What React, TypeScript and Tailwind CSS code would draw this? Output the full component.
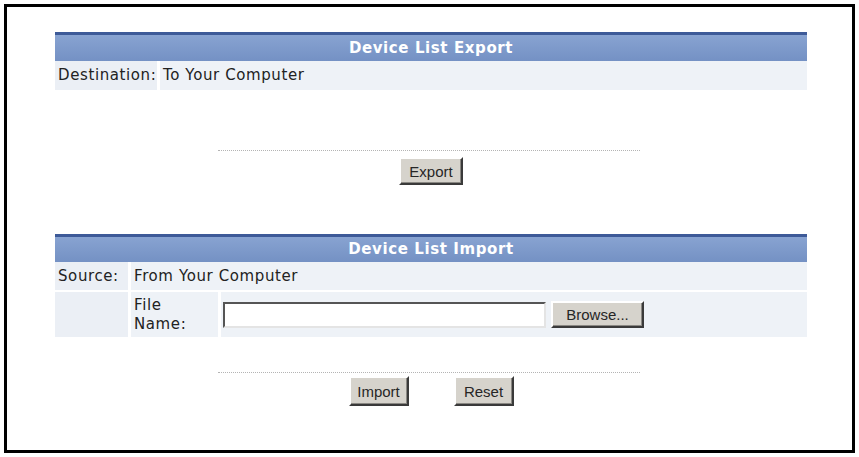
import type { ReactNode } from 'react'

const TEXT_FONT = "font-['DejaVu_Sans',Verdana,sans-serif]"
const BUTTON_FONT = "font-['Liberation_Sans',Arial,sans-serif]"

function SectionHeader({ title, height }: { title: string; height: string }) {
  return (
    <div
      className={`flex items-center justify-center border-t-[3px] border-[#3d5a98] bg-linear-to-b from-[#88a3d1] to-[#7491c4] text-[15px] font-bold tracking-[0.6px] text-white ${height} ${TEXT_FONT}`}
    >
      {title}
    </div>
  )
}

function ClassicButton({ children, size }: { children: ReactNode; size: string }) {
  return (
    <button
      className={`flex items-center justify-center border-2 border-t-white border-l-white border-r-[#3a3a3a] border-b-[#3a3a3a] bg-[#d6d3cc] text-[15px] leading-none tracking-normal text-[#262626] shadow-[inset_-1px_-1px_0_#8a8883] ${size} ${BUTTON_FONT}`}
      type="button"
    >
      {children}
    </button>
  )
}

function DottedRule({ top }: { top: string }) {
  return <div className={`ml-[163px] w-[422px] border-t border-dotted border-[#b4b4b4] ${top}`} />
}

export default function App() {
  return (
    <div className="h-[457px] w-[859px] bg-white p-[4px]">
      <div className="h-full border-[3px] border-black bg-white pt-[25px] pl-[48px]">
        <div className="w-[752px]">
          {/* export */}
          <SectionHeader title="Device List Export" height="h-[29px]" />
          <div className={`flex h-[29px] gap-[3px] text-[15px] tracking-[0.6px] text-[#222] ${TEXT_FONT}`}>
            <div className="flex w-[102px] items-center bg-[#ebeff5] pl-[3px]">Destination:</div>
            <div className="flex flex-1 items-center bg-[#eef2f7] pl-[3px]">To Your Computer</div>
          </div>

          <DottedRule top="mt-[60px]" />
          <div className="mt-[6px] flex justify-center">
            <ClassicButton size="h-[28px] w-[64px]">Export</ClassicButton>
          </div>

          {/* import */}
          <div className="mt-[49px]">
            <SectionHeader title="Device List Import" height="h-[28px]" />
          </div>
          <div className={`flex h-[28px] gap-[3px] text-[15px] tracking-[0.6px] text-[#222] ${TEXT_FONT}`}>
            <div className="flex w-[73px] items-center bg-[#ebeff5] pl-[3px]">Source:</div>
            <div className="flex flex-1 items-center bg-[#eef2f7] pl-[3px]">From Your Computer</div>
          </div>
          <div className={`mt-[2px] flex h-[45px] gap-[3px] text-[15px] tracking-[0.6px] text-[#222] ${TEXT_FONT}`}>
            <div className="w-[73px] bg-[#ebeff5]" />
            <div className="flex w-[87px] flex-col justify-center bg-[#eef2f7] pl-[3px] leading-[19px]">
              <span>File</span>
              <span>Name:</span>
            </div>
            <div className="flex flex-1 items-center gap-[5px] bg-[#eef2f7] pl-[2px]">
              <input
                className="h-[26px] w-[323px] border-2 border-t-[#555] border-l-[#555] border-r-[#e4e4e4] border-b-[#e4e4e4] bg-white outline-none"
                type="text"
              />
              <ClassicButton size="h-[27px] w-[93px]">Browse...</ClassicButton>
            </div>
          </div>

          <DottedRule top="mt-[35px]" />
          <div className="mt-[3px] flex justify-center gap-[45px]">
            <ClassicButton size="h-[30px] w-[60px]">Import</ClassicButton>
            <ClassicButton size="h-[30px] w-[60px]">Reset</ClassicButton>
          </div>
        </div>
      </div>
    </div>
  )
}
